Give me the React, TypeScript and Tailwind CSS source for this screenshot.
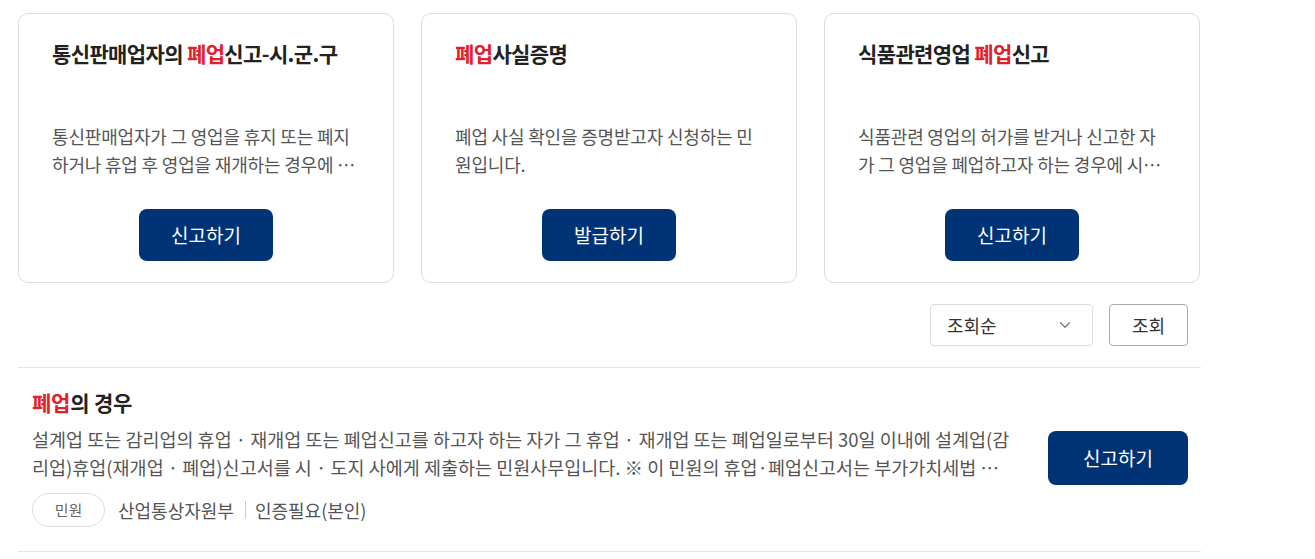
import { ChevronDown } from 'lucide-react'

interface Card {
  before: string
  after: string
  desc: string
  action: string
}

const cards: Card[] = [
  {
    before: '통신판매업자의 ',
    after: '신고-시.군.구',
    desc: '통신판매업자가 그 영업을 휴지 또는 폐지하거나 휴업 후 영업을 재개하는 경우에 신고하는 민원사무입니다.',
    action: '신고하기',
  },
  {
    before: '',
    after: '사실증명',
    desc: '폐업 사실 확인을 증명받고자 신청하는 민원입니다.',
    action: '발급하기',
  },
  {
    before: '식품관련영업 ',
    after: '신고',
    desc: '식품관련 영업의 허가를 받거나 신고한 자가 그 영업을 폐업하고자 하는 경우에 시장·군수·구청장에게 신고하는 민원입니다.',
    action: '신고하기',
  },
]

export default function App() {
  return (
    <div
      className="w-[1315px] h-[559px] bg-white text-[#222] overflow-hidden"
      style={{ fontFamily: '"Noto Sans CJK KR", "Noto Sans", sans-serif' }}
    >
      <div className="w-[1183px] ml-[18px] pt-[13px]">
        <div className="flex gap-[27px]">
          {cards.map((c) => (
            <div
              key={c.after + c.before}
              className="w-[376px] h-[270px] border border-[#dcdcdc] rounded-[10px] flex flex-col px-[33px] pt-[24px]"
            >
              <h3 className="text-[21px] leading-[30px] font-bold tracking-[-0.03em] text-[#222]">
                {c.before}
                <span className="text-[#e0202a]">폐업</span>
                {c.after}
              </h3>
              <p className="mt-[54px] h-[56px] text-[18px] leading-[28px] text-[#555] tracking-[-0.01em] line-clamp-2 break-all">
                {c.desc}
              </p>
              <button className="mt-[31px] self-center w-[134px] h-[52px] rounded-[8px] bg-[#003376] text-white text-[19px]">
                {c.action}
              </button>
            </div>
          ))}
        </div>

        <div className="flex justify-end gap-[16px] mt-[21px] pr-[13px]">
          <div className="w-[163px] h-[42px] border border-[#dcdcdc] rounded-[4px] flex items-center justify-between pl-[16px] pr-[18px] text-[18px] text-[#333]">
            <span>조회순</span>
            <ChevronDown size={18} strokeWidth={1.6} className="text-[#777]" />
          </div>
          <button className="w-[79px] h-[42px] border border-[#aaa] rounded-[4px] text-[18px] text-[#333]">
            조회
          </button>
        </div>

        <div className="mt-[21px] border-t border-b border-[#e5e5e5] flex items-center pl-[14px] pr-[13px] pt-[21px] pb-[24px]">
          <div className="flex-1 pr-[38px]">
            <h4 className="text-[21px] leading-[26px] font-bold tracking-[-0.01em] text-[#222]">
              <span className="text-[#e0202a]">폐업</span>의 경우
            </h4>
            <p className="mt-[10px] text-[18.5px] leading-[28px] text-[#555] line-clamp-2 break-all">
              설계업 또는 감리업의 휴업 · 재개업 또는 폐업신고를 하고자 하는 자가 그 휴업 · 재개업 또는 폐업일로부터 30일 이내에 설계업(감리업)휴업(재개업 · 폐업)신고서를 시 · 도지 사에게 제출하는 민원사무입니다. ※ 이 민원의 휴업·폐업신고서는 부가가치세법 시행규칙에 따른 휴업·폐업신고서를 함께 제출할 수 있습니다.
            </p>
            <div className="mt-[12px] flex items-center text-[18px] text-[#555]">
              <span className="w-[73px] h-[34px] border border-[#ddd] rounded-full flex items-center justify-center text-[15px] text-[#666]">
                민원
              </span>
              <span className="ml-[13px]">산업통상자원부</span>
              <span className="ml-[11px] mr-[9px] w-px h-[18px] bg-[#ccc]" />
              <span>인증필요(본인)</span>
            </div>
          </div>
          <button className="w-[140px] h-[54px] rounded-[8px] bg-[#003376] text-white text-[19px] shrink-0">
            신고하기
          </button>
        </div>
      </div>
    </div>
  )
}
